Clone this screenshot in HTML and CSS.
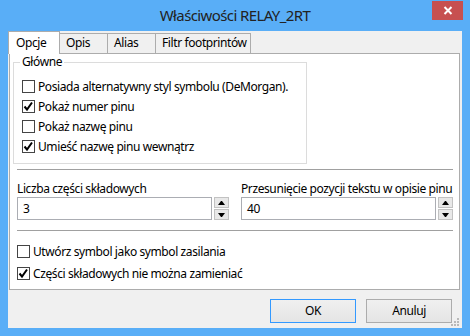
FILE: index.html
```html
<!DOCTYPE html>
<html lang="pl">
<head>
  <meta charset="UTF-8" />
  <title>Właściwości RELAY_2RT</title>
  <link rel="stylesheet" href="styles.css">
</head>
<body>
  <div class="window">
    <div class="titlebar">
      <span></span>
      <div class="title">Właściwości RELAY_2RT</div>
      <div class="close">
        <svg width="10" height="9" viewBox="0 0 10 9"><path d="M1.5 1 L8.5 8 M8.5 1 L1.5 8" stroke="#fff" stroke-width="2"/></svg>
      </div>
    </div>

    <div class="client">
      <div class="tabs">
        <div class="tab active">Opcje</div>
        <div class="tab">Opis</div>
        <div class="tab">Alias</div>
        <div class="tab">Filtr footprintów</div>
      </div>

      <div class="panel">
        <!-- Główne -->
        <fieldset class="group">
          <legend>Główne</legend>
          <div class="check"><span class="box"></span>Posiada alternatywny styl symbolu (DeMorgan).</div>
          <div class="check"><span class="box checked"><svg width="11" height="11" viewBox="0 0 11 11"><path d="M1.5 5.5 L4 8.5 L9 1.5" fill="none" stroke="#000" stroke-width="2"/></svg></span>Pokaż numer pinu</div>
          <div class="check"><span class="box"></span>Pokaż nazwę pinu</div>
          <div class="check"><span class="box checked"><svg width="11" height="11" viewBox="0 0 11 11"><path d="M1.5 5.5 L4 8.5 L9 1.5" fill="none" stroke="#000" stroke-width="2"/></svg></span>Umieść nazwę pinu wewnątrz</div>
        </fieldset>

        <hr class="sep">

        <div class="fields">
          <div class="field">
            <div class="field-label">Liczba części składowych</div>
            <div class="spin">
              <div class="spin-input">3</div>
              <div class="spin-buttons">
                <div class="spin-btn"><span class="arrow-up"></span></div>
                <div class="spin-btn"><span class="arrow-down"></span></div>
              </div>
            </div>
          </div>
          <div class="field">
            <div class="field-label">Przesunięcie pozycji tekstu w opisie pinu</div>
            <div class="spin">
              <div class="spin-input">40</div>
              <div class="spin-buttons">
                <div class="spin-btn"><span class="arrow-up"></span></div>
                <div class="spin-btn"><span class="arrow-down"></span></div>
              </div>
            </div>
          </div>
        </div>

        <hr class="sep sep-low">

        <div class="options">
          <div class="check"><span class="box"></span>Utwórz symbol jako symbol zasilania</div>
          <div class="check"><span class="box checked"><svg width="11" height="11" viewBox="0 0 11 11"><path d="M1.5 5.5 L4 8.5 L9 1.5" fill="none" stroke="#000" stroke-width="2"/></svg></span>Części składowych nie można zamieniać</div>
        </div>
      </div>

      <div class="buttons">
        <div class="btn default">OK</div>
        <div class="btn">Anuluj</div>
      </div>

      <svg class="grip" width="8" height="8" viewBox="0 0 8 8">
        <rect x="6" y="0" width="2" height="2" fill="#b9b9b9"/>
        <rect x="3" y="3" width="2" height="2" fill="#b9b9b9"/>
        <rect x="6" y="3" width="2" height="2" fill="#b9b9b9"/>
        <rect x="0" y="6" width="2" height="2" fill="#b9b9b9"/>
        <rect x="3" y="6" width="2" height="2" fill="#b9b9b9"/>
        <rect x="6" y="6" width="2" height="2" fill="#b9b9b9"/>
      </svg>
    </div>
  </div>
</body>
</html>
```

FILE: styles.css
```css
* {
  box-sizing: border-box;
}

body {
  margin: 0;
  padding: 0;
  font-family: "Noto Sans", "Open Sans", sans-serif;
  font-size: 12px;
  letter-spacing: -0.4px;
  color: #000;
  background: #59aef7;
}

.window {
  width: 470px;
  height: 336px;
  background: #59aef7;
  overflow: hidden;
}

.titlebar {
  height: 31px;
  display: grid;
  grid-template-columns: 1fr auto 1fr;
  align-items: start;
}

.title {
  font-size: 15px;
  letter-spacing: -0.6px;
  line-height: 30px;
  color: #222;
}

.close {
  justify-self: end;
  width: 31px;
  height: 19px;
  margin: 1px 7px 0 0;
  background: #c75050;
  display: flex;
  align-items: center;
  justify-content: center;
}

.client {
  position: relative;
  margin: 0 8px;
  height: 297px;
  background: #f0f0f0;
  padding: 2px 2px 0 1px;
  display: flex;
  flex-direction: column;
}

/* tabs */
.tabs {
  display: flex;
  align-items: flex-end;
  height: 20px;
}

.tab {
  height: 20px;
  min-width: 49px;
  padding: 0 3px 0 6px;
  margin-left: -1px;
  border: 1px solid #acacac;
  border-bottom: none;
  background: #f0f0f0;
  line-height: 18px;
  white-space: nowrap;
}

.tab.active {
  height: 23px;
  min-width: 52px;
  margin: -2px 0 -1px -1px;
  padding-left: 7px;
  background: #fff;
  line-height: 22px;
  z-index: 1;
}

.panel {
  height: 237px;
  border: 1px solid #acacac;
  background: #fff;
}

/* group box */
.group {
  width: 294px;
  margin: 0 0 0 3px;
  padding: 6px 8px 7px;
  border: 1px solid #dcdcdc;
}

.group legend {
  padding: 0 2px;
  margin-left: -2px;
  line-height: 16px;
}

.check {
  display: flex;
  align-items: center;
  gap: 3px;
  height: 20px;
  white-space: nowrap;
}

.box {
  width: 13px;
  height: 13px;
  border: 1px solid #444;
  background: #fff;
  flex: none;
}

.box svg {
  display: block;
}

.sep {
  border: none;
  height: 1px;
  background: #a0a0a0;
  margin: 5px 6px 0 7px;
}

.sep-low {
  margin-top: 10px;
}

/* number fields */
.fields {
  display: flex;
  gap: 12px;
  margin: 10px 6px 0 7px;
}

.field {
  flex: 1;
  min-width: 0;
}

.field-label {
  line-height: 17px;
  white-space: nowrap;
}

.spin {
  display: flex;
  gap: 2px;
  height: 23px;
}

.spin-input {
  flex: 1;
  border: 1px solid #abadb3;
  padding-left: 5px;
  line-height: 21px;
}

.spin-buttons {
  width: 15px;
  display: flex;
  flex-direction: column;
  gap: 1px;
}

.spin-btn {
  flex: 1;
  border: 1px solid #c2c2c2;
  background: #e8e8e8;
  display: flex;
  align-items: center;
  justify-content: center;
}

.arrow-up,
.arrow-down {
  width: 1px;
  border-left: 3px solid transparent;
  border-right: 3px solid transparent;
  box-sizing: content-box;
}

.arrow-up {
  border-bottom: 4px solid #000;
}

.arrow-down {
  border-top: 4px solid #000;
}

.options {
  margin: 10px 0 0 7px;
  display: flex;
  flex-direction: column;
  gap: 2px;
}

/* dialog buttons */
.buttons {
  display: flex;
  justify-content: flex-end;
  gap: 10px;
  padding: 9px 8px 0 0;
}

.btn {
  width: 86px;
  height: 24px;
  border: 1px solid #acacac;
  background: linear-gradient(#f0f0f0, #e5e5e5);
  text-align: center;
  line-height: 22px;
}

.btn.default {
  border-color: #3399ff;
}

.grip {
  position: absolute;
  right: 3px;
  bottom: 2px;
}
```
